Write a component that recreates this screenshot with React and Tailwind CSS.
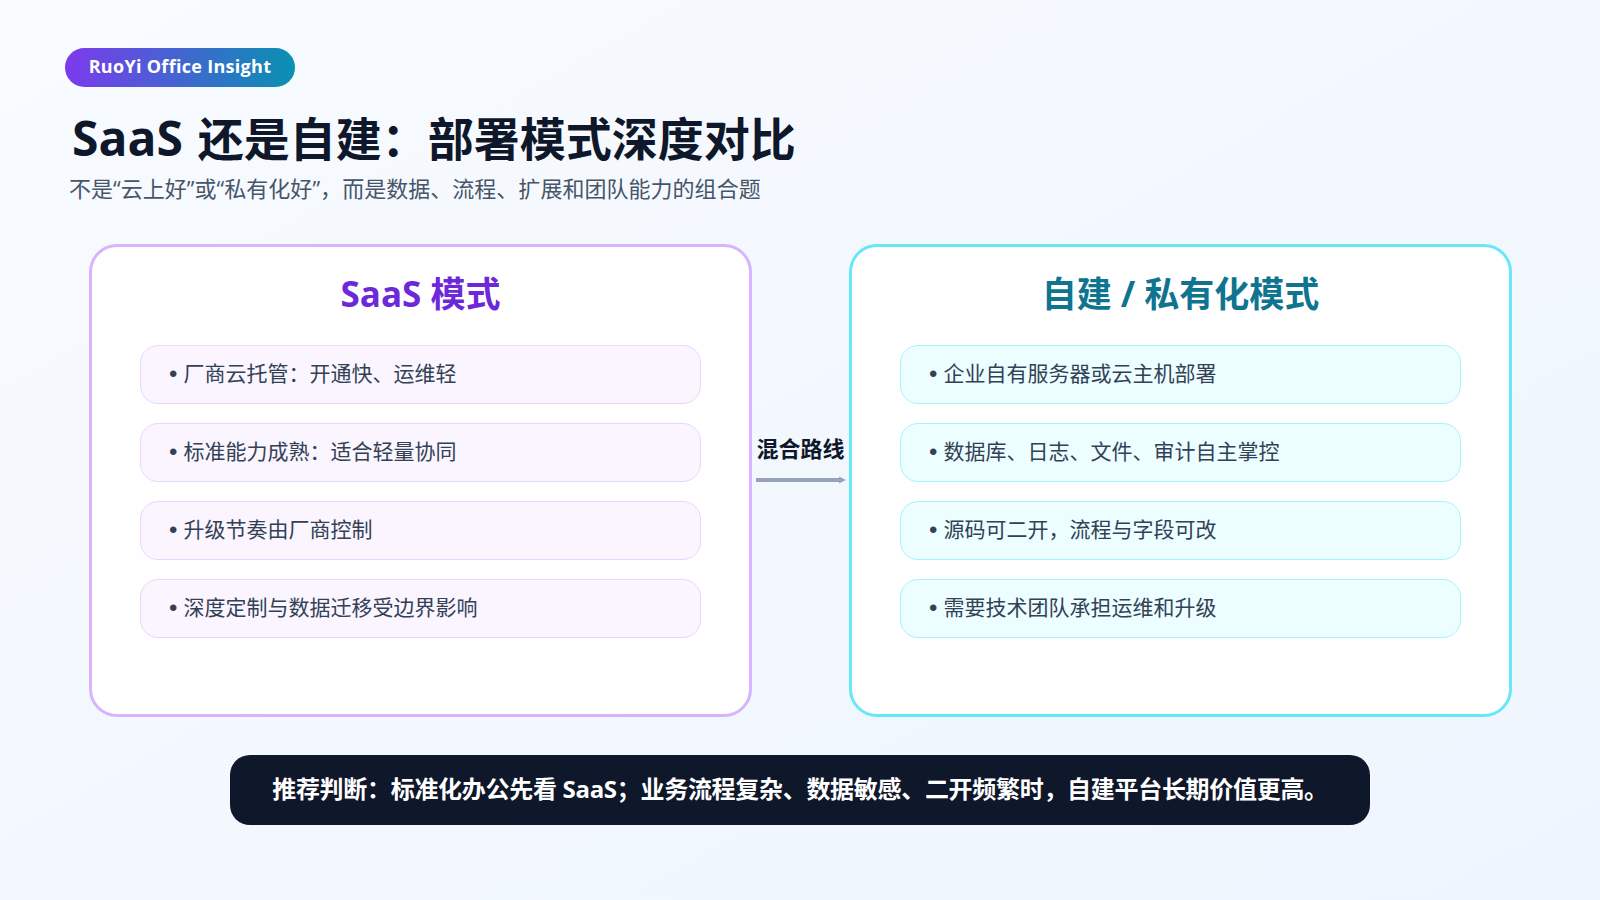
const font = "font-['Open_Sans','Noto_Sans_CJK_SC',sans-serif]";

const saasItems = [
  '厂商云托管：开通快、运维轻',
  '标准能力成熟：适合轻量协同',
  '升级节奏由厂商控制',
  '深度定制与数据迁移受边界影响',
];

const selfItems = [
  '企业自有服务器或云主机部署',
  '数据库、日志、文件、审计自主掌控',
  '源码可二开，流程与字段可改',
  '需要技术团队承担运维和升级',
];

const ModeCard = ({ title, items, cardClass, titleClass, itemClass }) => (
  <div className={`w-[663px] h-[473px] rounded-[28px] border-[3px] bg-white px-[48px] pt-[24px] ${cardClass}`}>
    <h2 className={`text-center text-[35px] font-bold leading-[46px] ${titleClass}`}>{title}</h2>
    <ul className="mt-[28px] flex flex-col gap-[19px]">
      {items.map((item) => (
        <li
          key={item}
          className={`flex h-[59px] items-center rounded-[18px] border px-[28px] pb-[2px] text-[21px] text-[#334155] ${itemClass}`}
        >
          <span className="mr-[6px] font-['Liberation_Sans',sans-serif] text-[24px] leading-none">•</span>
          {item}
        </li>
      ))}
    </ul>
  </div>
);

export default function App() {
  return (
    <div className={`h-[900px] w-[1600px] overflow-hidden bg-linear-to-br/srgb from-[#f8fbff] to-[#eef5fe] pt-[48px] ${font}`}>
      <div className="pl-[65px]">
        <div className="flex h-[39px] w-[230px] items-center justify-center rounded-full bg-linear-to-r/srgb from-[#7c3aed] to-[#0891b2] pb-[2px] text-[18px] font-bold tracking-[0.3px] text-white">
          RuoYi Office Insight
        </div>
        <h1 className="mt-[21px] pl-[7px] text-[46px] font-bold leading-[60px] text-[#0f172a]">
          <span className="mr-[3px] text-[48px]">SaaS</span> 还是自建：部署模式深度对比
        </h1>
        <p className="mt-[5px] pl-[4px] text-[22px] tracking-[0.03px] leading-[30px] text-[#475569]">
          不是“云上好”或“私有化好”，而是数据、流程、扩展和团队能力的组合题
        </p>
      </div>

      <div className="mt-[41px] flex pl-[89px]">
        <ModeCard
          title="SaaS 模式"
          items={saasItems}
          cardClass="border-[#d8b4fe]"
          titleClass="text-[#6d28d9]"
          itemClass="border-[#e9d5ff] bg-[#faf5ff]"
        />
        <div className="flex w-[97px] flex-col items-center pt-[189px]">
          <span className="text-[22px] font-bold leading-[30px] text-[#0f172a]">混合路线</span>
          <svg className="mt-[13px]" width="90" height="8" viewBox="0 0 90 8">
            <path d="M0 4H84" stroke="#94a3b8" strokeWidth="4" />
            <path d="M83 0.5L90 4L83 7.5Z" fill="#94a3b8" />
          </svg>
        </div>
        <ModeCard
          title="自建 / 私有化模式"
          items={selfItems}
          cardClass="border-[#67e8f9]"
          titleClass="text-[#0e7490]"
          itemClass="border-[#a5f3fc] bg-[#ecfeff]"
        />
      </div>

      <div className="mx-auto mt-[38px] flex h-[70px] w-[1140px] items-center justify-center rounded-[20px] bg-[#0f172a] pb-[2px] text-[24px] font-bold tracking-[-0.3px] text-white">
        推荐判断：标准化办公先看 SaaS；业务流程复杂、数据敏感、二开频繁时，自建平台长期价值更高。
      </div>
    </div>
  );
}
